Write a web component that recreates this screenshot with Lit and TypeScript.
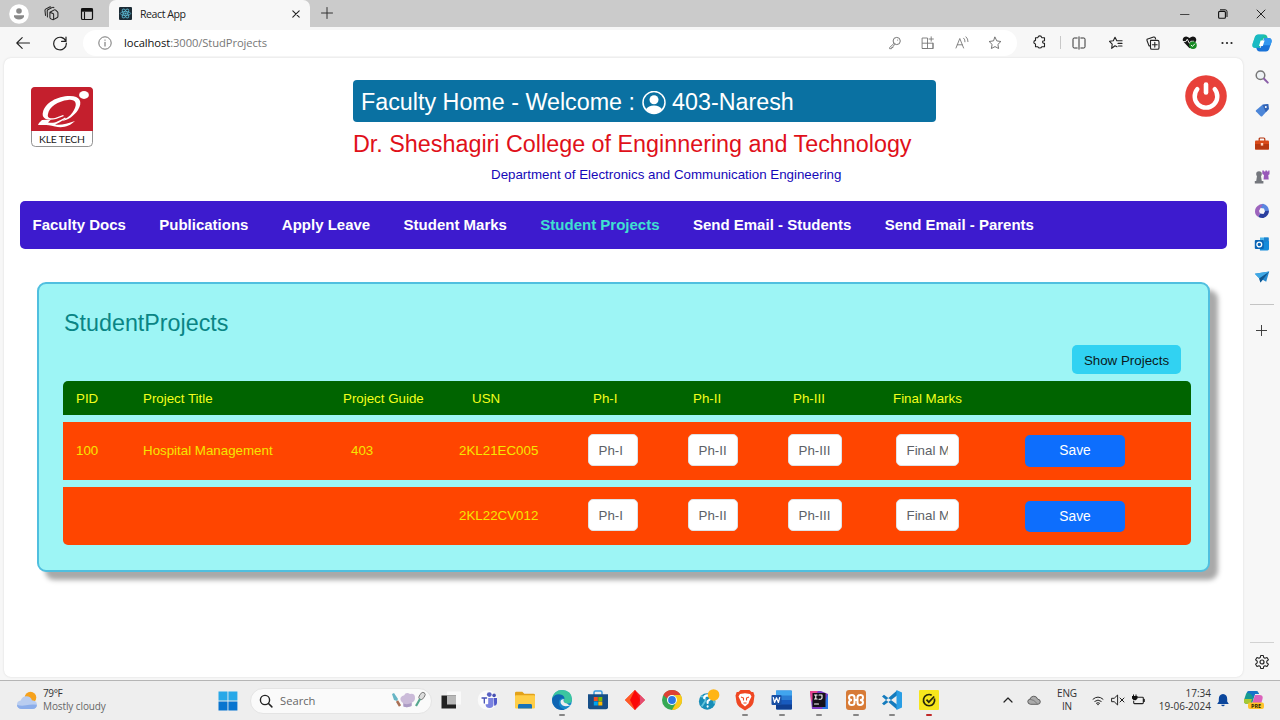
import { LitElement, html, css, svg, TemplateResult } from "lit";
import { customElement, property } from "lit/decorators.js";
import { classMap } from "lit/directives/class-map.js";

interface Glyph { box: number; art: TemplateResult }
const line = (d: string, color = "#222", w = 1) =>
  svg`<path d=${d} fill="none" stroke=${color} stroke-width=${w} stroke-linecap="round" stroke-linejoin="round"/>`;

/* Every glyph is drawn in a square view box of `box` units. */
const glyphs: Record<string, Glyph> = {
  profile: { box: 20, art: svg`<circle cx="10" cy="10" r="9.8" fill="#fff"/><circle cx="10" cy="7" r="2.8" fill="#8a8a8a"/><path d="M5 11.2h10v1c0 2-2.2 3.2-5 3.2s-5-1.200-5-3.200z" fill="#8a8a8a"/>` },
  workspaces: { box: 14, art: svg`${line("M5.500 5.800 9.600 3.600q.8-.4 1.300.3l1.700 1.600q.5.500.4 1.100v3q0 .7-.6 1.100l-3.600 2M5.500 5.800v5q0 .9.900 1.200l1.600.7q1 .3 1-.8V8q0-.7-.7-1zM3.200 10.300 3 4.600q0-.7.6-1.100L8 1.300q.8-.3 1.300.3M1.400 8.800.9 4.100q0-.8.600-1.200L5.300.9q.6-.2 1 .1", "#222", .95)}` },
  tabactions: { box: 14, art: svg`<rect x="1.500" y="1.500" width="11" height="11" rx="1.300" fill="none" stroke="#111" stroke-width="1.200"/><path d="M1.200 1.500h11.600v3.200H1.200z" fill="#111"/>${line("M4.500 5v7", "#111", 1.1)}` },
  react: { box: 13, art: svg`<rect width="13" height="13" rx="1" fill="#1c2b35"/><g fill="none" stroke="#5bb9d3" stroke-width=".8"><ellipse cx="6.500" cy="6.500" rx="5.200" ry="2"/><ellipse cx="6.500" cy="6.500" rx="5.200" ry="2" transform="rotate(60 6.5 6.5)"/><ellipse cx="6.500" cy="6.500" rx="5.200" ry="2" transform="rotate(120 6.5 6.5)"/></g><circle cx="6.500" cy="6.500" r="1.100" fill="#5bb9d3"/>` },
  x: { box: 12, art: line("M2.8 2.8 9.2 9.2M9.2 2.8 2.8 9.2", "#222", 1.1) },
  close: { box: 12, art: line("M2 2 10 10M10 2 2 10", "#222", 1) },
  plus: { box: 14, art: line("M7 1.5v11M1.500 7h11", "#333", 1) },
  minimize: { box: 12, art: line("M1.500 6.500h8.500", "#444", 1) },
  restore: { box: 12, art: svg`<rect x="1.600" y="3.400" width="6.800" height="6.800" rx="1" fill="none" stroke="#111" stroke-width="1.100"/>${line("M3.400 1.800h4.800q1.800 0 1.800 1.800v5", "#111", 1)}` },
  back: { box: 16, art: line("M14.500 8H2M7.200 2.600 1.800 8l5.400 5.400", "#222", 1.1) },
  reload: { box: 16, art: line("M13.900 6.300A6.300 6.300 0 1 0 14.300 8M14 2v4.400H9.600", "#222", 1.2) },
  info: { box: 14, art: svg`<circle cx="7" cy="7" r="6.200" fill="none" stroke="#666" stroke-width=".9"/>${line("M7 6.300v3.800M7 4v.3", "#666", 1)}` },
  key: { box: 14, art: svg`<circle cx="8.700" cy="5" r="3.600" fill="none" stroke="#777"/>${line("M6 7.400 1.600 11.500v1.200h2v-1.200h1.400v-1.300L7 8.400M9.600 4v.2", "#777", .9)}` },
  apps: { box: 14, art: line("M1.500 2h5v10.500h-5zM6.500 7.200H12v5.300H1.500M1.500 7.200h5M12 7.200v5.300M10.200.8v4.400M8 3h4.400", "#777", .9) },
  readaloud: { box: 14, art: line("M1 12 4.800 2.500 8.600 12M2.300 8.800h5M8.700 2.200q1.600 1.500 1.300 3.600M11 .8q2.200 2 2 4.800", "#777", .9) },
  star: { box: 14, art: line("m7 1.200 1.800 3.700 4.100.6-3 2.900.7 4.100L7 10.600l-3.600 1.900.7-4.100-3-2.900 4.100-.6z", "#666", .9) },
  extension: { box: 14, art: line("M2.500 2.700h2.300q.5-1.800 2-1.800t2 1.800h2.700v3.100q-1.900-.1-1.900 1.200t1.900 1.200v3.600H8.800q-.5 1.200-2 1.200t-2-1.200H2.500V9Q.8 8.700.8 7.200t1.700-1.800z", "#222", 1.1) },
  split: { box: 14, art: line("M5.200 2H2.200Q1 2 1 3.200v7.600Q1 12 2.200 12h3M8.800 2h3Q13 2 13 3.200v7.600Q13 12 11.800 12h-3M7 .8v12.4", "#333", 1) },
  favorites: { box: 14, art: line("M8 10.700 6 9.800l-3.300 2.500.5-4.200L.5 5.300l3.800-.6L6 1.200l1.800 3.500h5.300M9 7.400h4M9.500 10h3.500", "#222", 1.1) },
  collections: { box: 14, art: line("M4.400 9.900H3L1 4.500V3.200L7.600 1q1.300-.2 1.700 1l.3.9M4.500 4.400h7q1.500 0 1.500 1.500v6q0 1.300-1.500 1.300H6q-1.500 0-1.500-1.300zM8.800 6.300v4.800M6.400 8.700h4.800", "#222", 1.1) },
  health: { box: 16, art: svg`<path d="M8 14 1.500 7.200Q-.2 4.500 2 2.400 5 .5 8 3.300q3-2.800 6-.9 2.200 2.100.5 4.800z" fill="#161616"/><path d="M0 7h4l1.600-2.500L8 9l1.400-2.300H13" fill="none" stroke="#f7f7f7"/><circle cx="11.700" cy="10.800" r="4" fill="#168a22"/>${line("m9.800 10.900 1.300 1.300 2.400-2.600", "#fff", 1)}` },
  more: { box: 14, art: svg`<g fill="#222"><circle cx="2.500" cy="7" r="1.100"/><circle cx="7" cy="7" r="1.100"/><circle cx="11.500" cy="7" r="1.100"/></g>` },
  copilot: { box: 20, art: svg`<path d="M6 1.500h6.500q2 0 2.700 2l.6 2h-4.500L7.700 15H3.500Q-.3 15 .5 11L3 3.600Q3.800 1.500 6 1.500z" fill="#1dbfa2"/><path d="M3 4q.8-2.500 3-2.500h6L9 5.800 6.300 15H3.500Q-.3 15 .5 11z" fill="#18b7d6" opacity=".65"/><path d="M14 18.500H7.500q-2 0-2.700-2l-.6-1.700h4.500L12.300 5h4.200q3.800 0 3 4L17 16.400q-.8 2.100-3 2.100z" fill="#1973d8"/><path d="M12.300 5h4.200q3.800 0 3 4l-1 3.200H10z" fill="#3297ef"/><path d="M8.600 7.600h4L10.800 13H7z" fill="#fff"/>` },
  loupe: { box: 16, art: svg`<circle cx="6.500" cy="6.300" r="4.300" fill="#eef2f5" stroke="#777" stroke-width="1.500"/>${line("m10 9.800 3.800 3.800", "#8a5ea8", 2)}` },
  tag: { box: 16, art: svg`<path d="m2 8.300 6.500-5.600 5.700-.7.6 5-6.600 7.200q-.7.7-1.500 0L2 9.600q-.6-.6 0-1.300z" fill="#4c86d8"/><path d="m8.500 2.700 5.700-.7.6 5-3 3.300z" fill="#3263b4"/><circle cx="11.800" cy="4.900" r="1" fill="#fff"/>` },
  toolbox: { box: 16, art: svg`<path d="M5.200 5V3q0-1 1-1h3.600q1 0 1 1v2" fill="none" stroke="#b4350f" stroke-width="1.200"/><rect x="1" y="4.400" width="14" height="9.200" rx="1" fill="#d94a18"/><path d="M1 8h14v5q0 .6-1 .6H2q-1 0-1-.6z" fill="#b73910"/><rect x="6.800" y="7" width="2.400" height="2.600" fill="#ffd8c4"/>` },
  games: { box: 16, art: svg`<g fill="#74777d"><circle cx="5" cy="5" r="2.800"/><path d="M3 7h4l.8 5H2.200zM.8 12h8.600v2.600H.8z"/></g><path d="M8.300 1.400h1.600v1h1.500v-1h1.700v1h1.200v-1h1.200v3.800l-1.200.9.400 4.500H9.500L10 6 8.300 5z" fill="#9858b9"/>` },
  m365: { box: 16, art: svg`<path d="M5.500 1.800 9 .8q5.500 1.500 6 7l-3.800 1.400L10 5.600 6.600 5z" fill="#5a86e0"/><path d="M5.500 1.800Q1 4 1 8.500q0 3.500 3.500 5.500L6 10.500 5 8l1.600-3 2.300-3.600z" fill="#9d64bd"/><path d="m4.500 14 1.500-3.500 3.500.4L11.200 8l3.800-.2q0 5-5.500 7.200-2.800.4-5-1z" fill="#2b3f9f"/>` },
  outlook: { box: 16, art: svg`<rect x="6" y="1.500" width="8" height="10" fill="#49b4ea"/><rect x="10" y="1.500" width="4.800" height="5" fill="#1c82cf"/><path d="M5 7.500 15 5v8q0 1.400-1.400 1.400H6z" fill="#168bda"/><rect x=".8" y="4" width="9" height="9" rx="1" fill="#0b65b5"/><circle cx="5.300" cy="8.500" r="2.400" fill="none" stroke="#fff" stroke-width="1.300"/>` },
  plane: { box: 16, art: svg`<path d="M.8 4.700 15.200 2.500l-3 10.200-3.500-2-2.300 2.800-1.200-4.300z" fill="#2689cf"/><path d="m5.200 9.200 10-6.700-6.500 8.200-2.300 2.800z" fill="#10568f"/><path d="M.8 4.700 15.200 2.500l-10 6.700z" fill="#3fa8e5"/>` },
  gear: { box: 16, art: svg`<path d="M6.700 1.500h2.600l.4 2 1.300.7 2-.7 1.400 2.300-1.600 1.400v1.600l1.600 1.400-1.400 2.300-2-.7-1.300.7-.4 2H6.700l-.4-2-1.300-.7-2 .7-1.400-2.300 1.600-1.400V7.200L1.600 5.800 3 3.500l2 .7 1.300-.7z" fill="none" stroke="#222" stroke-width="1.100" stroke-linejoin="round"/><circle cx="8" cy="8" r="2" fill="none" stroke="#222" stroke-width="1.200"/>` },
  person: { box: 24, art: svg`<circle cx="12" cy="11.500" r="11" fill="none" stroke="#fff" stroke-width="1.500"/><circle cx="12" cy="8.700" r="4.500" fill="#fff"/><path d="M3.800 18.300Q6.500 14.500 12 14.500t8.200 3.800Q17 22.300 12 22.300t-8.200-4z" fill="#fff"/>` },
  power: { box: 42, art: svg`<circle cx="21" cy="21" r="20.800" fill="#e8413a"/><path d="M12.300 14.100A11.300 11.300 0 1 0 29.700 14.100" fill="none" stroke="#fff" stroke-width="4.400" stroke-linecap="round"/><path d="M21 9.500v8" stroke="#fff" stroke-width="4.600" stroke-linecap="round"/>` },
  weather: { box: 22, art: svg`<circle cx="14.500" cy="7.500" r="5.800" fill="#f6a21d"/><path d="M6 19q-5-.2-5-4.300 0-3.600 3.700-4.200Q6.500 6.300 10.400 6.300q4.300 0 5.500 4 5 .3 5 4.400 0 4.100-4.600 4.300z" fill="#b9cdf0"/><path d="M6 19q-5-.2-5-4.300 4 1.800 9 .6t10.900-.6q0 4.100-4.600 4.300z" fill="#8badea"/>` },
  windows: { box: 20, art: svg`<path d="M.5.500h9v9h-9zM10.400.5h9v9h-9z" fill="#28a8e8"/><path d="M.5 10.400h9v9h-9zM10.400 10.400h9v9h-9z" fill="#0874cf"/>` },
  search: { box: 14, art: svg`<circle cx="6" cy="6" r="4.600" fill="none" stroke="#222" stroke-width="1.400"/>${line("m9.500 9.500 3.400 3.400", "#222", 1.5)}` },
  taskview: { box: 22, art: svg`<rect x="7" y="2.500" width="14" height="13" fill="#f9f9f9"/><rect x="1.500" y="6.500" width="14.500" height="13" fill="#222"/><path d="M7 6.500h9v9H7z" fill="#b9b9b9"/>` },
  teams: { box: 22, art: svg`<circle cx="10.500" cy="11" r="9.800" fill="#fafafa"/><circle cx="12.300" cy="5.600" r="2.400" fill="#5961c3"/><circle cx="17.100" cy="6.400" r="1.800" fill="#4750b2"/><path d="M9 9h7.500v6q0 4-4 4T8.600 15z" fill="#7b83e0"/><path d="M16.800 9H20v4.600q0 3-2.800 3.200z" fill="#5059c9"/><rect x="3.200" y="7.200" width="8" height="8" rx=".8" fill="#fff"/>${line("M5 9h4.600M7.300 9v5", "#4650b5", 1.3)}` },
  folder: { box: 22, art: svg`<path d="M1 4q0-1.300 1.300-1.300h6l2 2h9.200Q21 4.700 21 6v4H1z" fill="#e3a21a"/><rect x="1" y="6.300" width="20" height="13.200" rx="1" fill="#ffce47"/><path d="M4 19.500v-3q0-1.400 1.400-1.400h11.200q1.400 0 1.400 1.400v3z" fill="#1872b8"/>` },
  edge: { box: 22, art: svg`<circle cx="11" cy="11" r="10" fill="#1687c9"/><path d="M1.200 9.500Q2.800 1 11 1q9.800.4 10 9.200 0 4.300-4.500 4.300-4.200 0-3.400-2.600Q13.700 7 8.800 6.700 4 6.500 1.200 9.500z" fill="#3bc6a0"/><path d="M1.200 9.500Q4 4.500 9.400 5.500q4 .8 4.200 4.500-3-2-5.200 1.100Q6 18.500 14 20.400 6 22.500 2.400 16 .8 13 1.200 9.500z" fill="#0e65b3"/><path d="M12.700 10q-4 .5-3 4.200 2.300 4.600 9.700 2.100-2.200-.2-3.500-1.800-4.200-.5-3.200-4.500z" fill="#eee"/>` },
  store: { box: 22, art: svg`<path d="M7 6V3.500Q7 2 8.500 2h5Q15 2 15 3.500V6" fill="none" stroke="#3a9be0" stroke-width="1.500"/><path d="M1 5.200h20v13q0 2-2 2H3q-2 0-2-2z" fill="#174f88"/><path d="M6.800 8h4v4h-4z" fill="#f25022"/><path d="M11.300 8h4v4h-4z" fill="#7fba00"/><path d="M6.800 12.500h4v4h-4z" fill="#00a4ef"/><path d="M11.300 12.500h4v4h-4z" fill="#ffb900"/>` },
  diamond: { box: 22, art: svg`<path d="M11 1 21 11 11 21 1 11z" fill="#f31d20"/><path d="M11 1v20L1 11z" fill="#ff5a24"/><path d="M11 1 16 11l-5 10-5-10z" fill="#fb0808"/><path d="m21 11-5-5v10z" fill="#e44c70"/>` },
  chrome: { box: 22, art: svg`<circle cx="11" cy="11" r="10" fill="#35a853"/><path d="M2.300 6A10 10 0 0 1 19.700 6H11q-4 0-4.500 4z" fill="#dd4034"/><path d="M19.700 6A10 10 0 0 1 11 21l4.500-8q1.500-4-2.500-7z" fill="#fbc918"/><circle cx="11" cy="11" r="5" fill="#fff"/><circle cx="11" cy="11" r="3.900" fill="#2c78e4"/>` },
  help: { box: 24, art: svg`<circle cx="10" cy="13.500" r="9" fill="#178db7"/><path d="M3 8q6 0 5 5l-4 6M12 5q5 4 6 11" fill="none" stroke="#63c4dc" stroke-width="2"/>${line("M6.700 10q.3-3 3.700-3 3.500.2 3.300 3-.2 1.800-3.200 3.300v2M10.500 19v.2", "#fff", 2.3)}<circle cx="17" cy="6.500" r="6.300" fill="#ffb514"/>` },
  brave: { box: 22, art: svg`<path d="M6.500 1h9l2 2 1.800 0 1.200 3.500-1 7q-.8 2.800-3 4.500L11 21.500 5.500 18q-2.200-1.700-3-4.500l-1-7L2.700 3l1.800 0z" fill="#ef4723"/><path d="m6 5 5-.8 5 .8 1.500 2.500-2.200 4.600-.8 2.300L11 17.500l-3.500-3.100-.8-2.300L4.500 7.500z" fill="#fff"/><path d="m7 8 2.500 1v2.500M15 8l-2.500 1v2.500M9.500 14h3" fill="none" stroke="#ef4723" stroke-width="1.100"/>` },
  word: { box: 22, art: svg`<rect x="5" y="1.500" width="16" height="19" rx="1" fill="#2b7cd3"/><path d="M5 1.500h15q1 0 1 1v4H5z" fill="#41a5ee"/><path d="M5 11h16v5H5z" fill="#185abd"/><path d="M5 15.500h16v4q0 1-1 1H6q-1 0-1-1z" fill="#103f91"/><rect x=".5" y="6" width="10" height="10" rx="1" fill="#1950a5"/>${line("m2.300 8.500 1.300 5 1.900-4.800 1.900 4.800 1.300-5", "#fff", 1.2)}` },
  idea: { box: 22, art: svg`<path d="M2 2h11l7 3v15H4z" fill="#7b3bc4"/><path d="M2 2h8L3 13z" fill="#e6448e"/><path d="M14 20h6V5z" fill="#2976e5"/><rect x="4.500" y="4" width="13" height="14" fill="#141019"/>${line("M6.500 6h2.600M7.800 6v4M6.500 10h2.600M11 6h3v3q0 1.200-1.600 1.200H11M6.500 15h4", "#fff", 1.1)}` },
  xampp: { box: 22, art: svg`<rect x="1" y="1" width="20" height="20" rx="3" fill="#d77b37"/><path d="M7 6q-3 0-3 2.400T7 11q-3 0-3 2.600T7 16q2.500 0 2.500-2.500V11h3v2.500Q12.500 16 15 16q3 0 3-2.400T15 11q3 0 3-2.600T15 6q-2.500 0-2.500 2.500V11h-3V8.500Q9.500 6 7 6z" fill="none" stroke="#fff" stroke-width="2"/>` },
  vscode: { box: 22, art: svg`<path d="m1 7.500 2-1.700L16 15.600v4.900zM1 14.500l2 1.700L16 6.400V1.500z" fill="#147bbd"/><path d="m15.500 1 5.500 2.500v15L15.500 21z" fill="#299ee5"/>` },
  norton: { box: 22, art: svg`<rect x="1" y="1" width="20" height="20" rx="1" fill="#f7e61d"/><path d="M16.400 9.500a5.600 5.600 0 1 1-2.700-3.300M8.500 10.700l2.300 2.500 5.400-5.700" fill="none" stroke="#27270c" stroke-width="1.700"/>` },
  chevron: { box: 14, art: line("m3 9 4-4 4 4", "#222", 1.2) },
  cloud: { box: 14, art: svg`<path d="M3.500 11.300Q.8 11 .8 8.600q0-2.100 2.200-2.500.9-2.900 3.800-2.900 3 0 3.800 2.900 2.700.2 2.700 2.700 0 2.300-2.500 2.500z" fill="#ababab" stroke="#555" stroke-width=".9"/><path d="M2.800 6.200q4 0 8 5" fill="none" stroke="#6d6d6d" stroke-width=".8"/>` },
  wifi: { box: 14, art: svg`${line("M2 6.200q5-4.400 10 0M3.800 8.300q3.200-2.700 6.400 0M5.400 10.200q1.600-1.200 3.200 0", "#222", 1)}<circle cx="7" cy="11.500" r=".8" fill="#222"/>` },
  mute: { box: 14, art: line("M1 5.300h2.200L6.600 2v10L3.200 8.700H1zM9 5l4 4M13 5 9 9", "#222", 1) },
  battery: { box: 14, art: svg`${line("M5.500 4.200h6q.8 0 .8.800v4.800q0 .8-.8.8h-8q-.8 0-.8-.8V8M13.300 6.400v2", "#222", 1.1)}<path d="M1 3h1V1.500h1V3h1.500V1.500h1V3h1v2.500L4.800 7.200 2.500 7 1 5.500z" fill="#111"/>` },
  bell: { box: 14, art: svg`<path d="M7 1Q2.800 1.500 2.800 6v2.500L1.200 11h11.600l-1.600-2.500V6Q11.200 1.500 7 1z" fill="#0b469c"/><path d="M5.200 11.700h3.600Q8.400 13.300 7 13.300t-1.800-1.600z" fill="#0b469c"/>` },
};

@customElement("ui-icon")
export class UiIcon extends LitElement {
  @property() name = "";
  @property({ type: Number }) size = 14;
  static styles = css`
    :host { display: inline-flex; flex: none; }
    svg { display: block; }
  `;
  render() {
    const g = glyphs[this.name];
    return html`<svg width=${this.size} height=${this.size} viewBox="0 0 ${g.box} ${g.box}">${g.art}</svg>`;
  }
}

const icon = (name: string, size = 14) => html`<ui-icon name=${name} .size=${size}></ui-icon>`;

@customElement("browser-chrome")
export class BrowserChrome extends LitElement {
  static styles = css`
    :host { display: block; font-family: "Open Sans", "Noto Sans", sans-serif; color: #222; }
    .tabs { height: 27px; background: #cbcbcb; display: flex; align-items: center; }
    .lead { width: 109px; display: flex; align-items: center; box-sizing: border-box; padding-left: 9px; gap: 15px; }
    .lead :last-child { margin-left: 6px; }
    .tab { width: 201px; height: 27px; box-sizing: border-box; background: #f7f7f7; border-radius: 7px 7px 0 0; display: flex; align-items: center; padding: 0 8px 0 10px; font-size: 10.6px; }
    .tab .label { margin-left: 8px; flex: 1; letter-spacing: -.45px; }
    .add { margin-left: 10px; }
    .winctl { margin-left: auto; display: flex; gap: 26px; padding-right: 13px; }
    .bar { height: 31px; background: #f7f7f7; display: flex; align-items: center; }
    .navs { width: 83px; display: flex; box-sizing: border-box; padding-left: 15px; gap: 21px; }
    .omni { width: 934px; height: 26px; box-sizing: border-box; border-radius: 13px; background: #fff; display: flex; align-items: center; padding: 0 15px 0 15px; }
    .url { margin-left: 12px; font-size: 11.2px; flex: 1; color: #777; letter-spacing: -.08px; }
    .url b { font-weight: 400; color: #111; }
    .acts { display: flex; gap: 19.3px; }
    .tools { flex: 1; display: flex; align-items: center; padding-left: 16px; }
    .t1 { width: 27px; } .sep { width: 11px; height: 13px; border-left: 1px solid #c8c8c8; }
    .set { display: flex; gap: 22.8px; align-items: center; }
    .cp { margin-left: auto; padding-right: 8px; display: flex; }
  `;
  render() {
    return html`
      <div class="tabs">
        <div class="lead">${icon("profile", 20)}${icon("workspaces", 15)}${icon("tabactions", 14)}</div>
        <div class="tab">${icon("react", 13)}<span class="label">React App</span>${icon("x", 12)}</div>
        <div class="add">${icon("plus", 14)}</div>
        <div class="winctl">${icon("minimize", 12)}${icon("restore", 12)}${icon("close", 12)}</div>
      </div>
      <div class="bar">
        <div class="navs">${icon("back", 16)}${icon("reload", 16)}</div>
        <div class="omni">${icon("info", 14)}<span class="url"><b>localhost</b>:3000/StudProjects</span>
          <div class="acts">${["key", "apps", "readaloud", "star"].map((n) => icon(n))}</div></div>
        <div class="tools"><div class="t1">${icon("extension")}</div><div class="sep"></div>
          <div class="set">${["split", "favorites", "collections", "health", "more"].map((n) => icon(n, n === "health" ? 15 : 14))}</div>
          <div class="cp">${icon("copilot", 20)}</div></div>
      </div>`;
  }
}

@customElement("edge-sidebar")
export class EdgeSidebar extends LitElement {
  static styles = css`
    :host { width: 37px; flex: none; display: flex; flex-direction: column; align-items: center; box-sizing: border-box; padding: 11px 0 0 0; }
    .apps { display: flex; flex-direction: column; gap: 17.4px; }
    hr { width: 24px; margin: 19px 0; border: 0; border-top: 1px solid #c4c4c4; }
    .foot { margin-top: auto; display: flex; flex-direction: column; align-items: center; gap: 11px; padding-bottom: 10px; }
    .rule { width: 24px; height: 1px; background: #d2d2d2; }
  `;
  render() {
    return html`<div class="apps">${["loupe", "tag", "toolbox", "games", "m365", "outlook", "plane"].map((n) => icon(n, 16))}</div>
      <hr />${icon("plus", 13)}
      <div class="foot"><div class="rule"></div>${icon("gear", 16)}</div>`;
  }
}

const NAV = ["Faculty Docs", "Publications", "Apply Leave", "Student Marks", "Student Projects", "Send Email - Students", "Send Email - Parents"];
const HEAD = ["PID", "Project Title", "Project Guide", "USN", "Ph-I", "Ph-II", "Ph-III", "Final Marks"];
const FIELDS = ["Ph-I", "Ph-II", "Ph-III", "Final Marks"];
const ROWS = [
  { pid: "100", title: "Hospital Management", guide: "403", usn: "2KL21EC005" },
  { pid: "", title: "", guide: "", usn: "2KL22CV012" },
];

@customElement("student-projects")
export class StudentProjects extends LitElement {
  static styles = css`
    :host { display: block; box-sizing: border-box; height: 290px; margin: 33px 33px 0 33px; padding: 23px 17px 24px 24px; border: 2px solid #50bfdf; border-radius: 9px; background: #9df5f5; box-shadow: 8px 8px 5px #a9a9a9; }
    h3 { margin: 0 0 0 1px; font-weight: 400; font-size: 23.3px; line-height: 32px; color: #0a8585; }
    .actions { display: flex; justify-content: flex-end; padding: 6px 10px 7px 0; }
    button { font: inherit; border: 0; border-radius: 5px; padding: 0; }
    .show { width: 109px; height: 28.5px; background: #31d2f2; color: #0b1a20; padding-top: 2px; }
    .table { display: flex; flex-direction: column; gap: 7.4px; }
    .row { height: 58px; box-sizing: border-box; padding-left: 13px; background: #ff4500; display: grid; grid-template-columns: 67px 200px 116px 129px 100px 100px 100px 137px 1fr; align-items: center; color: #f6e600; }
    .row > span { margin-top: -1px; }
    .row.head { height: 34px; background: #006400; color: #f3ff1c; border-radius: 5px 5px 0 0; }
    .row.head > span { margin-top: 1px; }
    .row:last-child { border-radius: 0 0 5px 5px; }
    .head .usn { padding-left: 13px; } .head .mark { padding-left: 5px; }
    .guide { padding-left: 8px; }
    .row input { font: inherit; box-sizing: border-box; display: block; height: 32px; width: 50px; margin-top: -2px; padding: 1px 10px 0 9.5px; border: 1px solid #dee2e6; border-radius: 5px; background: #fff; }
    input::placeholder { color: #5c6167; opacity: 1; }
    .row .w2 { width: 54px; } .row .w3 { width: 63px; margin-left: 8px; }
    .save { width: 100px; height: 31.5px; background: #0d6efd; color: #fff; font-size: 13.8px; }
  `;
  render() {
    return html`<h3>StudentProjects</h3>
      <div class="actions"><button class="show">Show Projects</button></div>
      <div class="table">
        <div class="row head">${HEAD.map((h, i) => html`<span class=${classMap({ usn: i === 3, mark: i > 3 })}>${h}</span>`)}</div>
        ${ROWS.map((r) => html`<div class="row">
          <span>${r.pid}</span><span>${r.title}</span><span class="guide">${r.guide}</span><span>${r.usn}</span>
          ${FIELDS.map((f, i) => html`<input class=${"w" + i} placeholder=${f} />`)}
          <button class="save">Save</button></div>`)}
      </div>`;
  }
}

@customElement("faculty-page")
export class FacultyPage extends LitElement {
  static styles = css`
    :host { display: block; flex: 1; margin: 0 0 3px 4px; border-radius: 7px; background: #fff; box-shadow: 0 0 2px #d4d4d4; font: 13.333px "Liberation Sans", Arial, sans-serif; }
    header { height: 143px; display: grid; grid-template-columns: 322px 583px 1fr; box-sizing: border-box; padding: 21.5px 16px 0 27px; align-items: start; }
    .logo { margin-top: 7.5px; width: 62px; height: 60px; }
    .logo text { font: 10.4px Lato, sans-serif; fill: #222; }
    .banner { height: 42px; box-sizing: border-box; border-radius: 4px; background: #0a71a2; color: #fff; display: flex; align-items: center; padding: 4px 8px 0; font-size: 23.3px; gap: 6.5px; white-space: pre; }
    .college { margin: 6px 0 0; font-weight: 400; font-size: 23.33px; line-height: 32px; color: #e0101a; white-space: nowrap; }
    .dept { margin: 6px 0 0 138px; line-height: 17px; color: #1508b8; white-space: nowrap; }
    .power { justify-self: end; margin-top: -4.5px; }
    nav { height: 48px; box-sizing: border-box; margin: 0 16px 0 16px; padding: 0 12.5px 2px; background: #3d1bce; border-radius: 5px; display: flex; align-items: center; gap: 33.4px; font-weight: 700; font-size: 15px; color: #fff; white-space: nowrap; }
    .on { color: #40e0d0; }
  `;
  render() {
    return html`<header>
        <svg class="logo" viewBox="0 0 62 60"><rect x=".5" y=".5" width="61" height="59" rx="4" fill="#fff" stroke="#777" stroke-width=".8"/>
          <path d="M0 44V4q0-4 4-4h54q4 0 4 4v40z" fill="#c41f2d"/>
          <ellipse cx="53" cy="8" rx="4.900" ry="3.900" fill="#fff"/>
          <path fill-rule="evenodd" fill="#fff" d="M12 25C14 16 26 9 39 9c10 0 13 6 8 14-4 6-10 10-16 11l3-2c4-2 7-5 9-9 4-7 1-11-6-10-10 1-19 7-20 14-1 4 2 5 7 4l8-3 1 1-8 3c-8 2-15 0-13-7z"/>
          <path d="m8 36 3-3 9-.5-3 3c7 1 10-1 17-5l1 1c-5 3-8 5-11 6 5 1 12-.500 20-3.500-5 5-12 7.500-20 5.500-7-2-11-1.500-17-1.500z" fill="#fff"/>
          <text x="8" y="55.500" textLength="46">KLE TECH</text></svg>
        <div>
          <div class="banner"><span>Faculty Home - Welcome :</span>${icon("person", 24)}<span>403-Naresh</span></div>
          <h2 class="college">Dr. Sheshagiri College of Enginnering and Technology</h2>
          <p class="dept">Department of Electronics and Communication Engineering</p>
        </div>
        <div class="power">${icon("power", 42)}</div>
      </header>
      <nav>${NAV.map((n, i) => html`<span class=${classMap({ on: i === 4 })}>${n}</span>`)}</nav>
      <student-projects></student-projects>`;
  }
}

const APPS: [string, string][] = [
  ["taskview", ""], ["teams", ""], ["folder", ""], ["edge", "run"], ["store", ""], ["diamond", ""], ["chrome", ""], ["help", ""],
  ["brave", "run"], ["word", "run"], ["idea", "run"], ["xampp", "run"], ["vscode", "run"], ["norton", "alert"],
];

@customElement("task-bar")
export class TaskBar extends LitElement {
  static styles = css`
    :host { display: flex; height: 40px; box-sizing: border-box; border-top: 1px solid #b5b5b5; background: #eee; align-items: center; font: 10px/13px "Open Sans", "Noto Sans", sans-serif; color: #333; white-space: nowrap; }
    .weather { width: 218px; box-sizing: border-box; padding-left: 16px; display: flex; align-items: center; gap: 5px; }
    .weather > div { margin-top: -2px; }
    .cloudy { color: #666; letter-spacing: -.1px; }
    .deg { letter-spacing: -.4px; }
    .start { display: flex; width: 32px; }
    .find { width: 182px; height: 26px; box-sizing: border-box; border-radius: 13px; background: #fafafa; border: 1px solid #e4e4e4; display: flex; align-items: center; padding: 0 4px 0 8px; font-size: 11.2px; color: #666; gap: 7px; }
    .find span { flex: 1; margin-top: -1px; }
    .apps { display: flex; margin-left: 1px; height: 39px; }
    .app { width: 36.75px; display: flex; flex-direction: column; align-items: center; box-sizing: border-box; padding-top: 8px; gap: 3px; }
    .app i { width: 6px; height: 2px; border-radius: 1px; }
    .run i { background: #858585; } .alert i { background: #c02828; }
    .tray { margin-left: auto; display: flex; align-items: center; padding-right: 16px; margin-top: -1px; }
    .lang { text-align: center; width: 34px; margin: 0 7px 0 9px; letter-spacing: -.2px; }
    .up { margin-right: 12.5px; display: flex; }
    .stat { display: flex; gap: 6px; }
    .clock { text-align: right; width: 66px; margin-right: 5px; }
    .bell { display: flex; margin-right: 14px; }
    .pre text { font: 700 5.5px "Open Sans", sans-serif; fill: #2a1c00; }
    svg { display: block; }
  `;
  render() {
    return html`
      <div class="weather">${icon("weather", 22)}<div><div class="deg">79°F</div><div class="cloudy">Mostly cloudy</div></div></div>
      <div class="start">${icon("windows", 20)}</div>
      <div class="find">${icon("search", 14)}<span>Search</span>
        <svg width="36" height="20" viewBox="0 0 36 20"><path d="m1 3 2-1 4 6-1 2-3-1z" fill="#67b5c5"/><path d="m6 10 3 5" stroke="#a86f54" stroke-width="2.500"/><path d="M12 12q-3-2-2.500-5Q11 4 13 4.500q2-4 6-1.500 5-1 5 4 0 3-3 4.500l-.5 3.500q-4 2-8 .5z" fill="#cbbbd9"/><path d="M12.500 12.500q4 1.500 8-.5v3q-4 2-8 .5z" fill="#ac9bc4"/><ellipse cx="31" cy="5" rx="2.500" ry="4" transform="rotate(35 31 5)" fill="#ddd" stroke="#777" stroke-width=".9"/><path d="m29 8-4 7" stroke="#56a78f" stroke-width="2.200"/></svg></div>
      <div class="apps">${APPS.map(([n, s]) => html`<div class="app ${s}">${icon(n, 22)}<i></i></div>`)}</div>
      <div class="tray">
        <div class="up">${icon("chevron")}</div>${icon("cloud")}
        <div class="lang">ENG<br />IN</div>
        <div class="stat">${icon("wifi")}${icon("mute")}${icon("battery")}</div>
        <div class="clock">17:34<br />19-06-2024</div>
        <div class="bell">${icon("bell")}</div>
        <svg class="pre" width="20" height="20" viewBox="0 0 20 20"><path d="M5 1h7q2 0 2.500 2l.5 1h-4l-3 10H3Q-1 14 0 10l2-6Q3 1 5 1z" fill="#169b91"/><path d="M5 1h7q2 0 2.500 2l.5 1h-4L9 8Q8 3 3 3 3.500 1 5 1z" fill="#1673c9"/><path d="M11 5h4.500q4 0 3 4l-1.500 5H8z" fill="#dc62bc"/><path d="M0 9h8l-1.500 5H3Q-1 14 0 9z" fill="#a6c836"/><rect x="4" y="12.500" width="16" height="6.500" rx="2" fill="#ffc329"/><text x="7" y="17.800">PRE</text></svg>
      </div>`;
  }
}

@customElement("app-root")
export class AppRoot extends LitElement {
  static styles = css`
    :host { display: flex; flex-direction: column; width: 1280px; height: 720px; overflow: hidden; background: #f7f7f7; }
    main { flex: 1; display: flex; min-height: 0; }
  `;
  render() {
    return html`<browser-chrome></browser-chrome>
      <main><faculty-page></faculty-page><edge-sidebar></edge-sidebar></main>
      <task-bar></task-bar>`;
  }
}
